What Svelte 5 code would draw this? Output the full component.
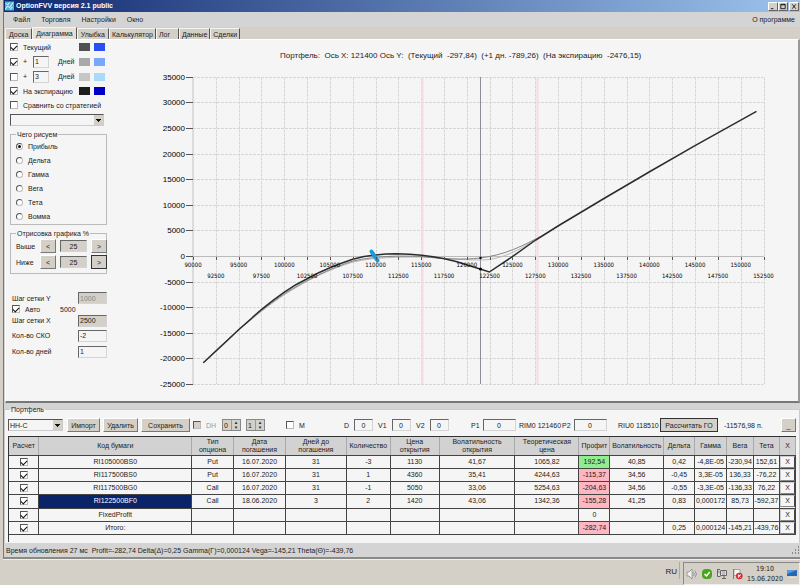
<script>
  const tabs = ['Доска', 'Диаграмма', 'Улыбка', 'Калькулятор', 'Лог', 'Данные', 'Сделки'];
  let activeTab = $state('Диаграмма');

  const plots = ['Прибыль', 'Дельта', 'Гамма', 'Вега', 'Тета', 'Вомма'];
  let plot = $state('Прибыль');

  // Chart scales
  const xOf = (strike) => 193 + ((strike - 90000) / 62500) * 570.5;
  const yOf = (profit) => 256 - (profit / 5000) * 25.6;
  const strikes = Array.from({ length: 26 }, (_, i) => 90000 + i * 2500);
  const profits = Array.from({ length: 13 }, (_, i) => 35000 - i * 5000);

  const columns = [
    { title: 'Расчет', width: 30 },
    { title: 'Код бумаги', width: 153 },
    { title: 'Тип опциона', width: 42 },
    { title: 'Дата погашения', width: 52 },
    { title: 'Дней до погашения', width: 61 },
    { title: 'Количество', width: 44 },
    { title: 'Цена открытия', width: 49 },
    { title: 'Волатильность открытия', width: 76 },
    { title: 'Теоретическая цена', width: 64 },
    { title: 'Профит', width: 31 },
    { title: 'Волатильность', width: 54 },
    { title: 'Дельта', width: 31 },
    { title: 'Гамма', width: 32 },
    { title: 'Вега', width: 27 },
    { title: 'Тета', width: 26 },
    { title: 'X', width: 16 }
  ];
  const total = columns.reduce((sum, c) => sum + c.width, 0);

  const rows = [
    ['RI105000BS0', 'Put', '16.07.2020', '31', '-3', '1130', '41,67', '1065,82', '192,54', '40,85', '0,42', '-4,8E-05', '-230,94', '152,61'],
    ['RI117500BS0', 'Put', '16.07.2020', '31', '1', '4360', '35,41', '4244,63', '-115,37', '34,56', '-0,45', '3,3E-05', '136,33', '-76,22'],
    ['RI117500BG0', 'Call', '16.07.2020', '31', '-1', '5050', '33,06', '5254,63', '-204,63', '34,56', '-0,55', '-3,3E-05', '-136,33', '76,22'],
    ['RI122500BF0', 'Call', '18.06.2020', '3', '2', '1420', '43,06', '1342,36', '-155,28', '41,25', '0,83', '0,000172', '85,73', '-592,37'],
    ['FixedProfit', '', '', '', '', '', '', '', '0', '', '', '', '', ''],
    ['Итого:', '', '', '', '', '', '', '', '-282,74', '', '0,25', '0,000124', '-145,21', '-439,76']
  ];
  let selected = $state(3);
</script>

<div class="desktop">
  <div class="window">
    <header class="titlebar">
      <svg class="logo" viewBox="0 0 10 10" aria-hidden="true">
        <rect width="10" height="10" fill="#4fb4dc" />
        <path d="M0 9 3 5 5 7 9 1M1 2l2 2 2-3M6 9l2-3" fill="none" stroke="#fff" />
      </svg>
      <h1>OptionFVV версия 2.1 public</h1>
      <button aria-label="Свернуть"><svg viewBox="0 0 9 8"><path d="M2 6.5h3" /></svg></button>
      <button aria-label="Развернуть"><svg viewBox="0 0 9 8"><path d="M2 1.5h5v5h-5zM2 2h5" /></svg></button>
      <button class="close" aria-label="Закрыть"><svg viewBox="0 0 9 8"><path d="M2.5 1.5l4 5M6.5 1.5l-4 5" /></svg></button>
    </header>

    <nav class="menu">
      <button>Файл</button>
      <button>Торговля</button>
      <button>Настройки</button>
      <button>Окно</button>
      <button class="about">О программе</button>
    </nav>

    <div class="tabs" role="tablist">
      {#each tabs as tab}
        <button role="tab" aria-selected={tab === activeTab} class:active={tab === activeTab} onclick={() => (activeTab = tab)}>{tab}</button>
      {/each}
    </div>

    <main class="page">
      <aside class="side">
        <div class="series">
          <label><input type="checkbox" checked />Текущий</label>
          <span class="swatches"><i class="c1"></i><i class="c2"></i></span>
        </div>
        <div class="series tall">
          <label><input type="checkbox" checked />+</label>
          <input class="box" aria-label="Дней, первая линия" value="1" />
          <span class="days">Дней</span>
          <span class="swatches"><i class="c3"></i><i class="c4"></i></span>
        </div>
        <div class="series tall">
          <label><input type="checkbox" />+</label>
          <input class="box" aria-label="Дней, вторая линия" value="3" />
          <span class="days">Дней</span>
          <span class="swatches"><i class="c5"></i><i class="c6"></i></span>
        </div>
        <div class="series">
          <label><input type="checkbox" checked />На экспирацию</label>
          <span class="swatches"><i class="c7"></i><i class="c8"></i></span>
        </div>
        <div class="series">
          <label><input type="checkbox" />Сравнить со стратегией</label>
        </div>
        <select class="strategy" aria-label="Стратегия"><option></option></select>

        <fieldset class="plots">
          <legend>Чего рисуем</legend>
          {#each plots as p}
            <label><input type="radio" name="plot" value={p} bind:group={plot} />{p}</label>
          {/each}
        </fieldset>

        <fieldset class="range">
          <legend>Отрисовка графика %</legend>
          <div>
            <label for="above">Выше</label>
            <button class="btn">&lt;</button>
            <input id="above" class="box gray" value="25" />
            <button class="btn">&gt;</button>
          </div>
          <div>
            <label for="below">Ниже</label>
            <button class="btn">&lt;</button>
            <input id="below" class="box gray" value="25" />
            <button class="btn focus">&gt;</button>
          </div>
        </fieldset>

        <div class="grid-settings">
          <label for="step-y">Шаг сетки Y</label>
          <input id="step-y" class="box gray" value="1000" disabled />
          <label class="auto"><input type="checkbox" checked />Авто</label>
          <output>5000</output>
          <label for="step-x">Шаг сетки X</label>
          <input id="step-x" class="box gray" value="2500" />
          <label for="sko">Кол-во СКО</label>
          <input id="sko" class="box" value="-2" />
          <label for="day-count">Кол-во дней</label>
          <input id="day-count" class="box" value="1" />
        </div>
      </aside>

      <section class="chart">
        <p>Портфель:&nbsp; Ось X: 121400 Ось Y:&nbsp; (Текущий&nbsp; -297,84)&nbsp; (+1 дн. -789,26)&nbsp; (На экспирацию&nbsp; -2476,15)</p>
        <svg viewBox="108 70 690 330" role="img" aria-label="График прибыли портфеля">
          <g class="grid">
            {#each profits as p}
              <path d="M193 {Math.round(yOf(p)) + 0.5}H763.5" />
            {/each}
            {#each strikes.slice(1) as s}
              <path d="M{Math.round(xOf(s)) + 0.5} 77.5V384" />
            {/each}
          </g>
          <path class="axis wide" d="M193 77V384" />
          <path class="axis" d="M193 256.5H763.5" />
          <path class="sigma" d="M422.5 77V384M537.5 77V384" />
          <path class="cursor" d="M480.5 77V384" />

          <path class="next" d="M203 363C235 332 261 310.500 284 295C307 280 330 269 353 262C376 257 397 257 422 257C445 258 460 260 480 260C505 260 523 247 545 234" />
          <path class="current" d="M203 363C235 331.500 261 309.800 284 294C307 279.500 330 268.500 353 261C376 256 397 255.500 422 256.500C445 259 462 260 480 258C505 255 523 246 545 234L558 226" />
          <path class="expiry" d="M203.300 362.700C215 352 227 341 238.300 330L261.700 309.300Q273 300 284 292.300T306.700 279Q318 272.500 330 267.700T352.700 259.300Q364 256 375.700 255Q386 253.700 396.700 253.700Q410 254 421.700 255.300T444.300 258.700T467.300 265L480 269L489.300 272L512.300 256.700L535.700 240L558 226L604 198.500L650 171.500L695 145.700L756.500 111.300" />
          <circle cx="480.500" cy="258" r="1.200" />
          <circle cx="480.500" cy="269" r="1.500" />
          <path class="mark" d="M371.500 251.500l6 9" />

          {#each profits as p}
            <path class="tick" d="M186 {Math.round(yOf(p)) + 0.5}h7" />
            <text class="profit" x="185" y={Math.round(yOf(p)) + 3}>{p}</text>
          {/each}
          {#each strikes as s, i}
            <path class="tick" d="M{Math.round(xOf(s)) + 0.5} 257v3" />
            <text class="strike" x={xOf(s)} y={i % 2 ? 278 : 267}>{s}</text>
          {/each}
        </svg>
      </section>
    </main>

    <fieldset class="portfolio">
      <legend>Портфель</legend>
      <div class="toolbar">
        <select aria-label="Портфель"><option>НН-С</option></select>
        <button class="btn">Импорт</button>
        <button class="btn">Удалить</button>
        <button class="btn">Сохранить</button>
        <label class="off"><input type="checkbox" disabled />DH</label>
        <span class="spin"><input aria-label="DH от" value="0" /><i><b>▴</b><b>▾</b></i></span>
        <span class="spin"><input aria-label="DH шаг" value="1" /><i><b>▴</b><b>▾</b></i></span>
        <label><input type="checkbox" />М</label>
        <label class="num">D<input class="box" value="0" /></label>
        <label class="num">V1<input class="box" value="0" /></label>
        <label class="num">V2<input class="box" value="0" /></label>
        <label class="num long">P1<input class="box" value="0" /></label>
        <span>RIM0 121460</span>
        <label class="num long">P2<input class="box" value="0" /></label>
        <span>RIU0 118510</span>
        <button class="btn focus">Рассчитать ГО</button>
        <span>-11576,98 п.</span>
        <button class="btn">_</button>
      </div>

      <div class="table-box">
        <table>
          <colgroup>
            {#each columns as c}
              <col style="width: {(c.width / total) * 100}%" />
            {/each}
          </colgroup>
          <thead>
            <tr>
              {#each columns as c}
                <th>{c.title}</th>
              {/each}
            </tr>
          </thead>
          <tbody>
            {#each rows as row, r}
              <tr>
                <td><input type="checkbox" checked aria-label={row[0]} /></td>
                {#each row as cell, i}
                  <td
                    class:selected={i === 0 && r === selected}
                    class:gain={i === 8 && parseFloat(cell) > 0}
                    class:loss={i === 8 && parseFloat(cell) < 0}
                    onclick={() => (selected = r)}>{cell}</td>
                {/each}
                <td class="del"><button aria-label="Удалить {row[0]}">X</button></td>
              </tr>
            {/each}
          </tbody>
        </table>
      </div>
    </fieldset>

    <footer class="status">
      <span>Время обновления 27 мс&nbsp; Profit=-282,74 Delta(Δ)=0,25 Gamma(Γ)=0,000124 Vega=-145,21 Theta(Θ)=-439,76</span>
      <svg viewBox="0 0 9 9" aria-hidden="true">
        <path d="M7 1h1M4 4h1M7 4h1M1 7h1M4 7h1M7 7h1" stroke="#888" stroke-width="2" />
      </svg>
    </footer>
  </div>

  <div class="taskbar">
    <span class="lang">RU</span>
    <div class="tray">
      <svg viewBox="0 0 12 12" aria-label="Громкость">
        <path d="M1 4h2l3-3v10l-3-3h-2z" fill="#f4f4f4" stroke="#888" stroke-width=".8" />
        <path d="M7.500 4q1.500 2 0 4M9 2.500q3 3.500 0 7" fill="none" stroke="#888" stroke-width=".8" />
      </svg>
      <svg viewBox="0 0 12 12" aria-label="Защита">
        <rect x="1" y="1" width="10" height="10" rx="4" fill="#4aa51c" />
        <path d="M3.500 6l2 2 3.200-4" fill="none" stroke="#fff" stroke-width="1.500" />
      </svg>
      <svg viewBox="0 0 12 12" aria-label="Сеть">
        <path d="M4.500 2.500h6v5h-6zM6 10.500h4M8 8v2.500M1 1.500h3M1 4h2.500M1.500 1.500v7h3" fill="#ddd" stroke="#666" />
        <path d="M6 4h3M6 6h3" stroke="#999" />
      </svg>
      <svg viewBox="0 0 12 12" aria-label="Центр поддержки">
        <path d="M2.500 1v10" stroke="#777" />
        <path d="M3 1.500h6v6h-6z" fill="#f6f6f6" stroke="#888" stroke-width=".7" />
        <circle cx="8.300" cy="8" r="3.300" fill="#d42a2a" />
        <path d="M7 6.700l2.600 2.600M9.600 6.700l-2.600 2.600" stroke="#fff" stroke-width="1.100" />
      </svg>
      <time>19:10<br />15.06.2020</time>
      <svg viewBox="0 0 12 12" aria-label="Рабочий стол">
        <path d="M1 2h10v6h-10z" fill="#2468b8" />
        <path d="M1 2h10l-10 4z" fill="#5a9ade" />
        <path d="M3 9.500h7" stroke="#d8e4f0" />
      </svg>
    </div>
  </div>
</div>

<style>
  :global(body) {
    background: #d4d0c8;
  }

  .desktop {
    padding-left: 3px;
    font: 7px/9px "Liberation Sans", Arial, sans-serif;
    color: #222;
  }

  .desktop * {
    box-sizing: border-box;
  }

  button,
  input,
  select {
    margin: 0;
    padding: 0;
    border: 0;
    border-radius: 0;
    background: none;
    font: inherit;
    color: inherit;
  }

  .window {
    border-left: 1px solid #777;
    border-bottom: 2px solid #8a8a86;
    background: #d4d4d4;
  }

  .titlebar {
    display: flex;
    align-items: center;
    height: 12px;
    padding: 0 1px;
    background: linear-gradient(90deg, #10296f, #9cc3ec);
  }

  .logo {
    width: 9px;
    height: 10px;
    margin-right: 2px;
  }

  h1 {
    flex: 1;
    margin: 0;
    font: bold 7px/12px "Liberation Sans", Arial, sans-serif;
    color: #fff;
  }

  .titlebar button {
    width: 10px;
    height: 9px;
    border: 1px solid #666;
    border-top-color: #fff;
    border-left-color: #fff;
    background: #d4d0c8;
  }

  .titlebar .close {
    margin-left: 1px;
  }

  .titlebar button svg {
    display: block;
    width: 8px;
    height: 7px;
    fill: none;
    stroke: #111;
  }

  .menu {
    display: flex;
    gap: 11px;
    height: 15px;
    padding: 0 5px 0 9px;
  }

  .menu .about {
    margin-left: auto;
  }

  .tabs {
    display: flex;
    align-items: flex-end;
    height: 12px;
    padding-left: 1px;
    background: #d4d0c8;
  }

  .tabs button {
    height: 11px;
    padding: 0 3px;
    border: 1px solid #f4f4f4;
    border-right: 1px solid #555;
    border-bottom: 0;
  }

  .tabs button:nth-child(n + 4) {
    padding: 0 2px;
  }

  .tabs .active {
    height: 12px;
    background: #e4e0d8;
  }

  .tabs button:nth-child(5) {
    padding-right: 8px;
  }

  .page {
    display: flex;
    margin-left: 1px;
    height: 364px;
    border: 1px solid #fff;
    border-right: 2px solid #999;
    border-bottom: 2px solid #777;
    background: #f5f5f5;
  }

  .side {
    flex: none;
    width: 102px;
    padding-left: 4px;
  }

  .series {
    display: flex;
    align-items: center;
    height: 14px;
  }

  .series.tall {
    height: 15px;
  }

  label {
    display: flex;
    align-items: center;
  }

  input[type="checkbox"],
  input[type="radio"] {
    flex: none;
    appearance: none;
    display: grid;
    place-items: center;
    width: 8px;
    height: 8px;
    margin-right: 5px;
    border: 1px solid #bbb;
    border-top-color: #555;
    border-left-color: #555;
    background: #fff;
  }

  input[type="checkbox"]:checked::before {
    content: "";
    width: 5px;
    height: 3px;
    border-left: 1px solid #111;
    border-bottom: 1px solid #111;
    rotate: -45deg;
  }

  input[type="radio"] {
    width: 7px;
    height: 7px;
    border-radius: 50%;
  }

  input[type="radio"]:checked::before {
    content: "";
    width: 3px;
    height: 3px;
    border-radius: 50%;
    background: #111;
  }

  .box {
    width: 16px;
    height: 12px;
    padding: 0 1px;
    border: 1px solid #d4d4d4;
    border-top: 1px solid #666;
    border-left: 1px solid #666;
    background: #f5f5f5;
  }

  .box.gray {
    background: #d4d0c8;
  }

  .box:disabled {
    color: #888;
  }

  .series .box {
    margin-left: 6px;
  }

  .days {
    margin-left: 9px;
  }

  .swatches {
    display: flex;
    gap: 4px;
    margin-left: auto;
    margin-right: 3px;
  }

  .swatches i {
    width: 11px;
    height: 8px;
  }

  .c1 { background: #505050; }
  .c2 { background: #2850f0; }
  .c3 { background: #a8a8a8; }
  .c4 { background: #78a8fa; }
  .c5 { background: #c6c6c6; }
  .c6 { background: #a8dafa; }
  .c7 { background: #1c1c1c; }
  .c8 { background: #0000c4; }

  select {
    appearance: none;
    border: 1px solid #ccc;
    border-top-color: #555;
    border-left-color: #555;
    background:
      linear-gradient(#111, #111) right 4px top 6px / 1px 1px no-repeat,
      linear-gradient(#111, #111) right 3px top 5px / 3px 1px no-repeat,
      linear-gradient(#111, #111) right 2px top 4px / 5px 1px no-repeat,
      linear-gradient(#d4d0c8, #d4d0c8) right / 9px 100% no-repeat,
      #f5f5f5;
  }

  .strategy {
    display: block;
    width: 94px;
    height: 12px;
    margin-top: 2px;
  }

  fieldset {
    min-width: 0;
    margin: 0;
    padding: 0;
    border: 1px solid #bbb;
  }

  legend {
    margin-left: 5px;
    padding: 0 1px;
  }

  .side fieldset {
    width: 97px;
  }

  .plots {
    margin-top: 4px;
  }

  .side .plots {
    height: 95px;
  }

  .plots label {
    height: 14px;
    padding-left: 5px;
  }

  .side .range {
    height: 45px;
    margin-top: 4px;
  }

  .range div {
    display: grid;
    grid-template-columns: 20px 16px 27px 16px;
    column-gap: 4px;
    align-items: center;
    height: 16px;
    padding-left: 5px;
  }

  .range label {
    width: 24px;
  }

  .range .box {
    width: 27px;
    text-align: center;
  }

  .btn {
    height: 14px;
    border: 1px solid #777;
    border-top-color: #fff;
    border-left-color: #fff;
    background: #d4d0c8;
    white-space: nowrap;
  }

  .btn.focus {
    border-color: #333;
  }

  .grid-settings {
    display: grid;
    grid-template-columns: 66px 29px;
    grid-template-rows: 12px 10px 13px 17px 15px;
    align-items: center;
    margin-top: 18px;
    padding-left: 2px;
  }

  .grid-settings .box {
    width: 29px;
    height: 12px;
  }

  .grid-settings output {
    margin-left: -18px;
  }

  .chart {
    flex: 1;
    min-width: 0;
  }

  .chart p {
    height: 30px;
    margin: 0;
    padding: 11px 0 0 172px;
    font-size: 8px;
    white-space: nowrap;
  }

  .chart svg {
    display: block;
    width: 100%;
  }

  .chart path {
    fill: none;
  }

  .grid path {
    stroke: #d6d6d6;
    stroke-dasharray: 3 1;
  }

  .axis {
    stroke: #bbb;
  }

  .axis.wide {
    stroke: #dcdcdc;
    stroke-width: 2;
  }

  .sigma {
    stroke: #f8dcdf;
    stroke-width: 2;
  }

  .cursor {
    stroke: #8a8c96;
  }

  .next {
    stroke: #b8b8b8;
  }

  .current {
    stroke: #858585;
  }

  .expiry {
    stroke: #2c2c2c;
    stroke-width: 1.5;
  }

  .mark {
    stroke: #189cdc;
    stroke-width: 4;
    stroke-linecap: round;
  }

  .tick {
    stroke: #555;
  }

  .profit {
    font-size: 8px;
    text-anchor: end;
  }

  .strike {
    font: 6px "DejaVu Sans Condensed", "DejaVu Sans", sans-serif;
    text-anchor: middle;
  }

  .portfolio {
    height: 138px;
    margin-top: 2px;
    border-color: #ccc;
    border-bottom: 0;
    background: #f5f5f5;
  }

  .toolbar {
    display: grid;
    grid-template-columns: 59px 36px 38px 52px 29px 24px 40px 58px 34px 38px 55px 48px 43px 56px 42px 64px 1fr 15px;
    align-items: center;
    height: 22px;
    padding: 0 3px;
    white-space: nowrap;
  }

  .toolbar select {
    width: 55px;
    height: 12px;
    padding-left: 1px;
  }

  .toolbar .btn {
    margin-right: 3px;
  }

  .toolbar .btn.focus {
    margin-right: 6px;
  }

  .toolbar .btn:last-child {
    margin-right: 0;
  }

  .off {
    color: #999;
  }

  .off input[type="checkbox"] {
    background: #d4d0c8;
  }

  .num {
    gap: 5px;
  }

  .num .box {
    width: 19px;
    text-align: center;
  }

  .num.long {
    gap: 3px;
  }

  .num.long .box {
    width: 33px;
  }

  .spin {
    display: flex;
    width: 19px;
    height: 12px;
    border: 1px solid #888;
    background: #d4d0c8;
  }

  .spin input {
    width: 8px;
    padding-left: 1px;
  }

  .spin i {
    display: grid;
    flex: 1;
    font: 5px/5px "DejaVu Sans", sans-serif;
    text-align: center;
  }

  .spin b {
    height: 5px;
    overflow: hidden;
    border-left: 1px solid #999;
    font-weight: normal;
  }

  .table-box {
    height: 106px;
    margin: 0 3px;
    border-top: 1px solid #333;
    border-left: 1px solid #333;
  }

  table {
    width: 100%;
    height: 98px;
    border-collapse: collapse;
    table-layout: fixed;
  }

  th,
  td {
    padding: 0;
    border-right: 1px solid #444;
    border-bottom: 1px solid #444;
    text-align: center;
    white-space: nowrap;
    line-height: 8px;
  }

  th {
    height: 18px;
    padding: 0 1px;
    border-right-color: #aaa;
    background: #d2d2d2;
    font-weight: normal;
    white-space: normal;
  }

  td input[type="checkbox"] {
    margin: 0 auto;
  }

  .selected {
    background: #0a246a;
    color: #fff;
  }

  .gain {
    background: #90ee90;
  }

  .loss {
    background: #ffb6c1;
  }

  .del button {
    display: block;
    width: 100%;
    height: 12px;
    border: 1px solid #ccc;
    border-right-color: #444;
    border-bottom-color: #888;
  }

  .status {
    display: flex;
    justify-content: space-between;
    align-items: center;
    height: 14px;
    padding-left: 2px;
  }

  .status svg {
    width: 9px;
    height: 9px;
  }

  .taskbar {
    display: flex;
    justify-content: flex-end;
    height: 26px;
    padding-top: 2px;
    border-top: 1px solid #eee;
  }

  .lang {
    padding-right: 2px;
    font-size: 8px;
    line-height: 20px;
    height: 17px;
    margin-right: 3px;
    border-right: 1px solid #aaa;
  }

  .tray {
    display: flex;
    align-items: center;
    gap: 3px;
    padding: 0 1px 0 2px;
    border: 1px solid #eee;
    border-top-color: #888;
    border-left-color: #888;
  }

  .tray svg {
    width: 12px;
    height: 12px;
  }

  time {
    margin-left: 1px;
    font: 7px/10px "DejaVu Sans Condensed", "DejaVu Sans", sans-serif;
    text-align: center;
  }
</style>
